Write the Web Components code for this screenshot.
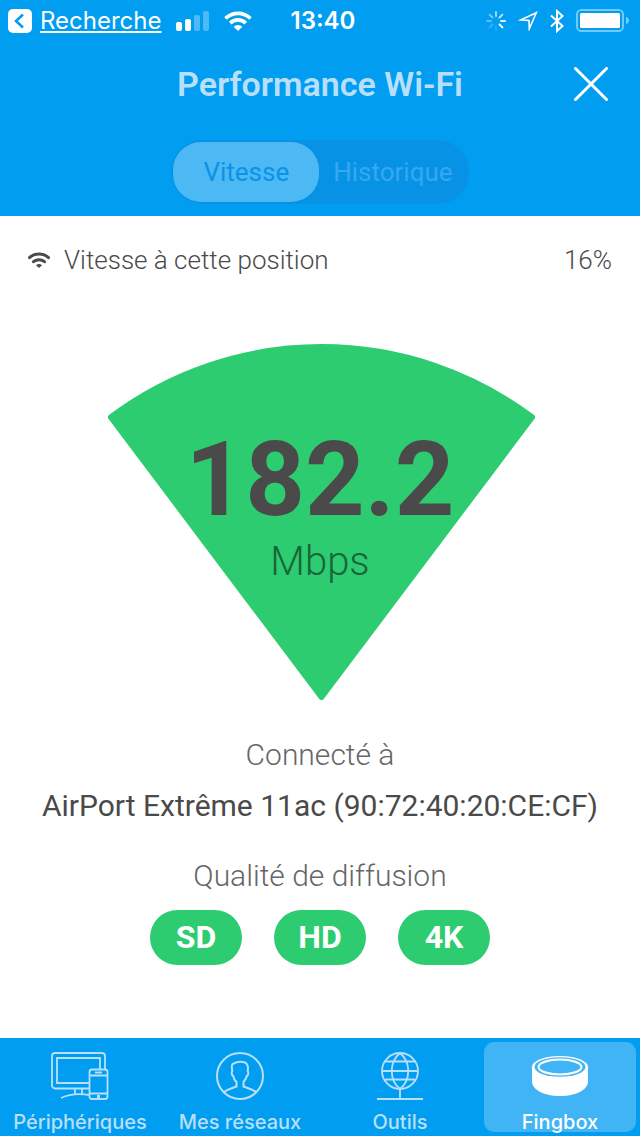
<!DOCTYPE html>
<html lang="fr">
<head>
<meta charset="utf-8">
<meta name="viewport" content="width=device-width, initial-scale=1">
<title>Performance Wi-Fi</title>
<style>
  body { margin: 0; background: #fff; font-family: Roboto, sans-serif; }
</style>
</head>
<body>
<wifi-app></wifi-app>

<script>
const define = (name, html) => {
  const template = document.createElement('template');
  template.innerHTML = html;
  customElements.define(name, class extends HTMLElement {
    constructor() {
      super();
      this.attachShadow({ mode: 'open' }).append(template.content.cloneNode(true));
    }
  });
};

/* Icon set: [width, height, markup] */
const ICONS = {
  back: [24, 24, `<rect width="24" height="24" rx="5" fill="currentColor"/><path d="m15 5.500-7 6.500 7 6.500" fill="none" stroke="#009df1" stroke-width="2.500"/>`],
  signal: [34, 20, `<g fill="currentColor"><rect y="11" width="6" height="9" rx="2"/><rect x="9" y="8" width="6" height="12" rx="2"/><g opacity=".3"><rect x="18" y="4" width="6" height="16" rx="2"/><rect x="27" width="6" height="20" rx="2"/></g></g>`],
  wifi: [28, 20, `
    <path d="M14 20 9.600 15.800a6.400 6.400 0 0 1 8.800 0z" fill="currentColor"/>
    <path d="M6.200 12.100a11.200 11.200 0 0 1 15.600 0M1.500 7.500a17.800 17.800 0 0 1 25 0" fill="none" stroke="currentColor" stroke-width="3.800"/>`],
  wifismall: [22, 16, `
    <path d="M11 16 8 13.200a4.600 4.600 0 0 1 6 0z" fill="currentColor"/>
    <path d="M5.500 9.700a8.400 8.400 0 0 1 11 0M1.500 5.600a14.500 14.500 0 0 1 19 0" fill="none" stroke="currentColor" stroke-width="3" stroke-linecap="round"/>`],
  spinner: [20, 20, `<g stroke="currentColor" stroke-width="2" stroke-linecap="round">
    <path d="M10 1v4" opacity=".6"/><path d="m16.400 3.600-2.900 2.900" opacity=".7"/><path d="M19 10h-4" opacity=".85"/><path d="m16.400 16.400-2.900-2.900"/>
    <path d="M10 19v-4" opacity=".12"/><path d="m3.600 16.400 2.900-2.900" opacity=".22"/><path d="M1 10h4" opacity=".35"/><path d="m3.600 3.600 2.900 2.900" opacity=".45"/></g>`],
  location: [20, 20, `<path d="M18.300 1.700 2.500 8.900l8.500.5.300 8.400z" fill="none" stroke="currentColor" stroke-width="1.600" stroke-miterlimit="8"/>`],
  bluetooth: [14, 24, `<path d="m1 6.500 11.500 10.500L7 22V2l5.500 5L1 17.500" fill="none" stroke="currentColor" stroke-width="2"/>`],
  battery: [54, 24, `<rect x="1" y="1" width="46" height="21" rx="4.500" fill="none" stroke="currentColor" stroke-width="2" opacity=".45"/><rect x="4" y="4" width="40" height="15" rx="1.500" fill="currentColor"/><path d="M50 8q3 1 3 3.500T50 15z" fill="currentColor" opacity=".5"/>`],
  close: [34, 34, `<path d="m1.500 1.500 31 31m0-31-31 31" stroke="currentColor" stroke-width="3" stroke-linecap="round"/>`],
  devices: [58, 48, `<g fill="none" stroke="currentColor" stroke-width="1.800">
    <path d="M38 36.500H4a3 3 0 0 1-3-3V4a3 3 0 0 1 3-3h47a3 3 0 0 1 3 3v13"/><path d="M38 31H6V6h43v11"/>
    <path d="M24 36.500v5m7-5v5M10 46q12-5.500 28-3"/><rect x="38.500" y="17.500" width="18" height="29.500" rx="2.500"/><path d="M38.500 23.500h18M38.500 41.500h18M44 20.500h7"/></g><path d="M46 43h3v3h-3z" fill="currentColor"/>`],
  person: [48, 48, `<g fill="none" stroke="currentColor" stroke-width="2"><circle cx="24" cy="24" r="23"/>
    <path d="M8 40c4-3 9-4 12.500-5.500V30c-2.500-2.500-3-4-3.300-6-1.700-.6-1.900-4-.9-4.800-1-6-.3-7.700 1.700-7.700 3-2.500 11-2.500 13 .8 1.500 2 1 4.500.7 6.900 1 .8.800 4.200-.9 4.800-.3 2-1 3.500-3.300 6v4.500C31 36 36 37 40 40"/></g>`],
  globe: [46, 48, `<g fill="none" stroke="currentColor" stroke-width="1.800"><circle cx="23" cy="19" r="18"/><path d="M23 1c-11 9-11 27 0 36M23 1c11 9 11 27 0 36M8 9.500h30M5 19h36M8 27.500h30M23 37v10M0 47h46"/></g>`],
  fingbox: [56, 40, `<path d="M0 11v14c0 9 12 15 28 15s28-6 28-15V11z" fill="currentColor"/><ellipse cx="28" cy="11" rx="28" ry="11" fill="currentColor"/><ellipse cx="28" cy="11" rx="25.500" ry="9.800" fill="#40b4f4"/><ellipse cx="28" cy="11" rx="21.500" ry="7.500" fill="#40b4f4" stroke="currentColor" stroke-width="2"/>`]
};

customElements.define('app-icon', class extends HTMLElement {
  connectedCallback() {
    if (this.shadowRoot) return;
    const [w, h, body] = ICONS[this.getAttribute('name')];
    this.attachShadow({ mode: 'open' }).innerHTML =
      `<style>:host{display:block;flex:none}svg{display:block}</style>
       <svg width="${w}" height="${h}" viewBox="0 0 ${w} ${h}" aria-hidden="true">${body}</svg>`;
  }
});

define('status-bar', `
  <style>
    :host { display: grid; grid-template-columns: 1fr auto 1fr; align-items: center; height: 40px; padding: 1px 10px 0 8px; box-sizing: border-box; color: #fff; font: 400 24px/28px Inter, sans-serif; }
    div { display: flex; align-items: center; }
    a { display: flex; align-items: center; gap: 8px; color: inherit; text-decoration: none; }
    a span { text-decoration: underline; text-decoration-thickness: 2px; text-underline-offset: 2px; }
    .left { gap: 14px; }
    .right { justify-content: flex-end; gap: 12px; }
    time { padding-left: 8px; font-weight: 600; }
  </style>
  <div class="left"><a href="#"><app-icon name="back"></app-icon><span>Recherche</span></a><app-icon name="signal"></app-icon><app-icon name="wifi"></app-icon></div>
  <time>13:40</time>
  <div class="right"><app-icon name="spinner"></app-icon><app-icon name="location"></app-icon><app-icon name="bluetooth"></app-icon><app-icon name="battery"></app-icon></div>
`);

define('title-bar', `
  <style>
    :host { display: grid; grid-template-columns: 1fr auto 1fr; align-items: center; height: 88px; padding: 0 32px; }
    h1 { grid-column: 2; margin: 0; font-size: 34px; line-height: 40px; font-weight: 600; color: #b8dffb; }
    button { justify-self: end; padding: 0; border: 0; background: none; color: #fff; }
  </style>
  <h1><slot></slot></h1>
  <button type="button" aria-label="Fermer"><app-icon name="close"></app-icon></button>
`);

define('view-switch', `
  <style>
    :host { display: flex; width: fit-content; margin: 12px auto; padding: 2px; border-radius: 32px; background: #0892e6; }
    button { height: 60px; padding: 0 14px; border: 0; border-radius: 28px; background: none; color: #36a8ef; font: 400 26px/32px Roboto, sans-serif; }
    button[aria-pressed=true] { padding: 0 30px; background: #4cb9f5; color: #0a93e7; }
  </style>
  <button type="button" aria-pressed="true">Vitesse</button><button type="button" aria-pressed="false">Historique</button>
`);

define('speed-gauge', `
  <style>
    :host { display: grid; justify-items: center; color: #4a4a4a; }
    svg, div { grid-area: 1 / 1; display: block; }
    div { padding-top: 82px; text-align: center; }
    strong, span { display: block; }
    strong { font-size: 104px; line-height: 108px; font-weight: 700; }
    span { font-size: 40px; line-height: 56px; font-weight: 300; color: #17653a; }
  </style>
  <svg width="432" height="356" viewBox="0 0 432 356" aria-hidden="true">
    <path d="M217.500 353 7 73.200A351 351 0 0 1 428 73.200z" fill="#2ecc71" stroke="#2ecc71" stroke-width="6" stroke-linejoin="round"/>
  </svg>
  <div><strong><slot></slot></strong><span>Mbps</span></div>
`);

define('quality-badge', `
  <style>
    :host { display: block; width: 92px; border-radius: 28px; background: #2ecc71; color: #fff; font-size: 32px; line-height: 55px; font-weight: 700; text-align: center; }
  </style><slot></slot>
`);

define('nav-tab', `
  <style>
    :host { display: block; flex: 1; min-width: 0; color: #b8dffb; }
    :host([current]) { color: #fff; }
    a { display: flex; flex-direction: column; align-items: center; gap: 12px; height: 90px; margin: 4px; padding-top: 10px; box-sizing: border-box; border-radius: 10px; color: inherit; text-decoration: none; white-space: nowrap; font: 500 20px/20px Inter, sans-serif; }
    :host([current]) a { background: #40b4f4; }
    .icon { display: flex; align-items: center; height: 48px; }
  </style>
  <a href="#"><span class="icon"><slot name="icon"></slot></span><span><slot></slot></span></a>
`);

define('wifi-app', `
  <style>
    :host { display: flex; flex-direction: column; min-height: 100vh; }
    header { display: flow-root; background: #009df1; }
    main { flex: 1; padding: 28px 28px 0; color: #4a4a4a; font-weight: 300; text-align: center; }
    .position { display: flex; align-items: center; gap: 14px; font-size: 26px; line-height: 32px; }
    .position output { margin-left: auto; }
    speed-gauge { margin-top: 68px; }
    h2, p { margin: 0; font-size: 30px; line-height: 40px; font-weight: 300; color: #666; }
    h2 { margin-top: 35px; }
    p { margin-top: 11px; font-weight: 400; color: #4a4a4a; }
    p + h2 { margin-top: 30px; }
    .badges { display: flex; justify-content: center; gap: 32px; margin-top: 14px; }
    nav { display: flex; background: #009df1; }
  </style>
  <header>
    <status-bar></status-bar>
    <title-bar>Performance Wi-Fi</title-bar>
    <view-switch></view-switch>
  </header>
  <main>
    <div class="position"><app-icon name="wifismall"></app-icon><span>Vitesse à cette position</span><output>16%</output></div>
    <speed-gauge>182.2</speed-gauge>
    <h2>Connecté à</h2>
    <p>AirPort Extrême 11ac (90:72:40:20:CE:CF)</p>
    <h2>Qualité de diffusion</h2>
    <div class="badges"><quality-badge>SD</quality-badge><quality-badge>HD</quality-badge><quality-badge>4K</quality-badge></div>
  </main>
  <nav>
    <nav-tab><app-icon slot="icon" name="devices"></app-icon>Périphériques</nav-tab>
    <nav-tab><app-icon slot="icon" name="person"></app-icon>Mes réseaux</nav-tab>
    <nav-tab><app-icon slot="icon" name="globe"></app-icon>Outils</nav-tab>
    <nav-tab current><app-icon slot="icon" name="fingbox"></app-icon>Fingbox</nav-tab>
  </nav>
`);
</script>
</body>
</html>
